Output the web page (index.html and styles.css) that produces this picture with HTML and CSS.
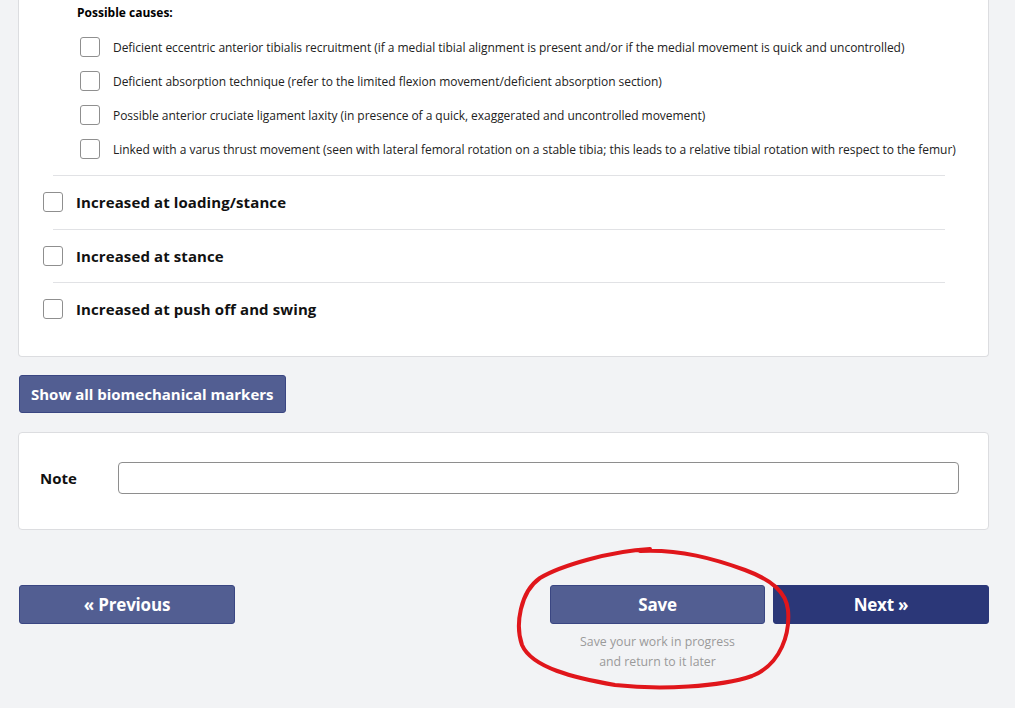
FILE: index.html
```html
<!DOCTYPE html>
<html lang="en">
<head>
<meta charset="utf-8">
<title>Biomechanical markers</title>
<link rel="stylesheet" href="styles.css">
</head>
<body>
<div class="page">
  <section class="card card-top">
    <div class="causes">
      <div class="causes-title">Possible causes:</div>
      <label class="sub-row"><input type="checkbox" class="cb"><span>Deficient eccentric anterior tibialis recruitment (if a medial tibial alignment is present and/or if the medial movement is quick and uncontrolled)</span></label>
      <label class="sub-row"><input type="checkbox" class="cb"><span>Deficient absorption technique (refer to the limited flexion movement/deficient absorption section)</span></label>
      <label class="sub-row"><input type="checkbox" class="cb"><span>Possible anterior cruciate ligament laxity (in presence of a quick, exaggerated and uncontrolled movement)</span></label>
      <label class="sub-row"><input type="checkbox" class="cb"><span>Linked with a varus thrust movement (seen with lateral femoral rotation on a stable tibia; this leads to a relative tibial rotation with respect to the femur)</span></label>
    </div>
    <div class="divider"></div>
    <label class="main-row"><input type="checkbox" class="cb"><span>Increased at loading/stance</span></label>
    <div class="divider"></div>
    <label class="main-row"><input type="checkbox" class="cb"><span>Increased at stance</span></label>
    <div class="divider"></div>
    <label class="main-row"><input type="checkbox" class="cb"><span>Increased at push off and swing</span></label>
  </section>

  <button class="btn btn-light btn-markers">Show all biomechanical markers</button>

  <section class="card card-note">
    <label class="note-label" for="note">Note</label>
    <input id="note" class="note-input" type="text">
  </section>

  <div class="nav">
    <button class="btn btn-light btn-nav">« Previous</button>
    <div class="nav-right">
      <div class="save-col">
        <button class="btn btn-light btn-nav btn-save">Save</button>
        <p class="save-help">Save your work in progress<br>and return to it later</p>
      </div>
      <button class="btn btn-dark btn-nav">Next »</button>
    </div>
  </div>

  <svg class="annotation" width="1015" height="708" viewBox="0 0 1015 708" aria-hidden="true">
    <path d="M650 549 C610 551 560 566 540 578 C520 592 515 625 522 645 C532 668 575 678 615 685 C660 690 720 687 752 676 C782 664 790 632 788 610 C786 592 772 580 745 570 C715 559 680 549 640 551" fill="none" stroke="#e0161b" stroke-width="4" stroke-linecap="round" stroke-linejoin="round"/>
  </svg>
</div>
</body>
</html>
```
FILE: styles.css
```css
* { box-sizing: border-box; }
html, body { margin: 0; padding: 0; }
body {
  background: #f2f3f5;
  font-family: "Open Sans", "Noto Sans", "Liberation Sans", sans-serif;
  color: #111;
  width: 1015px;
  height: 708px;
  overflow: hidden;
}
.page {
  position: relative;
  width: 1015px;
  height: 708px;
  padding: 0 26px 0 18px;
}
.card {
  background: #fff;
  border: 1px solid #dcdde0;
  border-radius: 4px;
}
.card-top {
  border-top: none;
  border-radius: 0 0 4px 4px;
  padding: 0 43px 20.5px 24px;
}
.causes { padding-left: 34px; }
.causes-title {
  font-size: 12px;
  font-weight: 700;
  line-height: 26px;
  margin-bottom: 4px;
  color: #000;
}
.sub-row {
  display: flex;
  align-items: center;
  height: 34px;
  font-size: 12px;
  color: #222;
  white-space: nowrap;
  letter-spacing: -0.04px;
}
.sub-row .cb { margin: 0 13px 0 3px; }
.cb {
  appearance: none;
  -webkit-appearance: none;
  width: 20px;
  height: 20px;
  flex: none;
  margin: 0 13px 0 0;
  border: 1px solid #8f8f8f;
  border-radius: 3px;
  background: #fff;
}
.divider {
  height: 1px;
  background: #e1e2e5;
  margin: 9px 0 0 10px;
}
.main-row + .divider { margin-top: 0; }
.main-row {
  display: flex;
  align-items: center;
  height: 52.5px;
  font-size: 15px;
  font-weight: 700;
  color: #111;
  letter-spacing: 0.1px;
}
.btn {
  font-family: inherit;
  font-weight: 700;
  color: #fff;
  border-radius: 3px;
  cursor: pointer;
}
.btn-light {
  background: #525e92;
  border: 1px solid #3a4682;
}
.btn-dark {
  background: #2b3778;
  border: 1px solid #2b3778;
}
.btn-markers {
  display: block;
  margin: 18px 0 0 1px;
  height: 38px;
  padding: 0 11px;
  font-size: 15px;
}
.card-note {
  display: flex;
  align-items: center;
  margin-top: 19px;
  height: 98px;
  padding: 0 29px 6px 21px;
}
.note-label {
  width: 78px;
  flex: none;
  font-size: 15px;
  font-weight: 700;
  color: #111;
}
.note-input {
  flex: 1;
  height: 32px;
  border: 1px solid #8e8e8e;
  border-radius: 4px;
  background: #fff;
}
.nav {
  display: flex;
  justify-content: space-between;
  align-items: flex-start;
  margin-top: 55px;
  padding-left: 1px;
}
.nav-right {
  display: flex;
  gap: 8px;
  align-items: flex-start;
}
.btn-nav {
  width: 216px;
  height: 39px;
  font-size: 17px;
  letter-spacing: -0.2px;
}
.btn-save { width: 215px; }
.save-col { display: flex; flex-direction: column; align-items: center; }
.save-help {
  margin: 8px 0 0;
  font-size: 12.3px;
  line-height: 20px;
  color: #9a9a9a;
  text-align: center;
}
.annotation {
  position: absolute;
  left: 0;
  top: 0;
  pointer-events: none;
}
```
